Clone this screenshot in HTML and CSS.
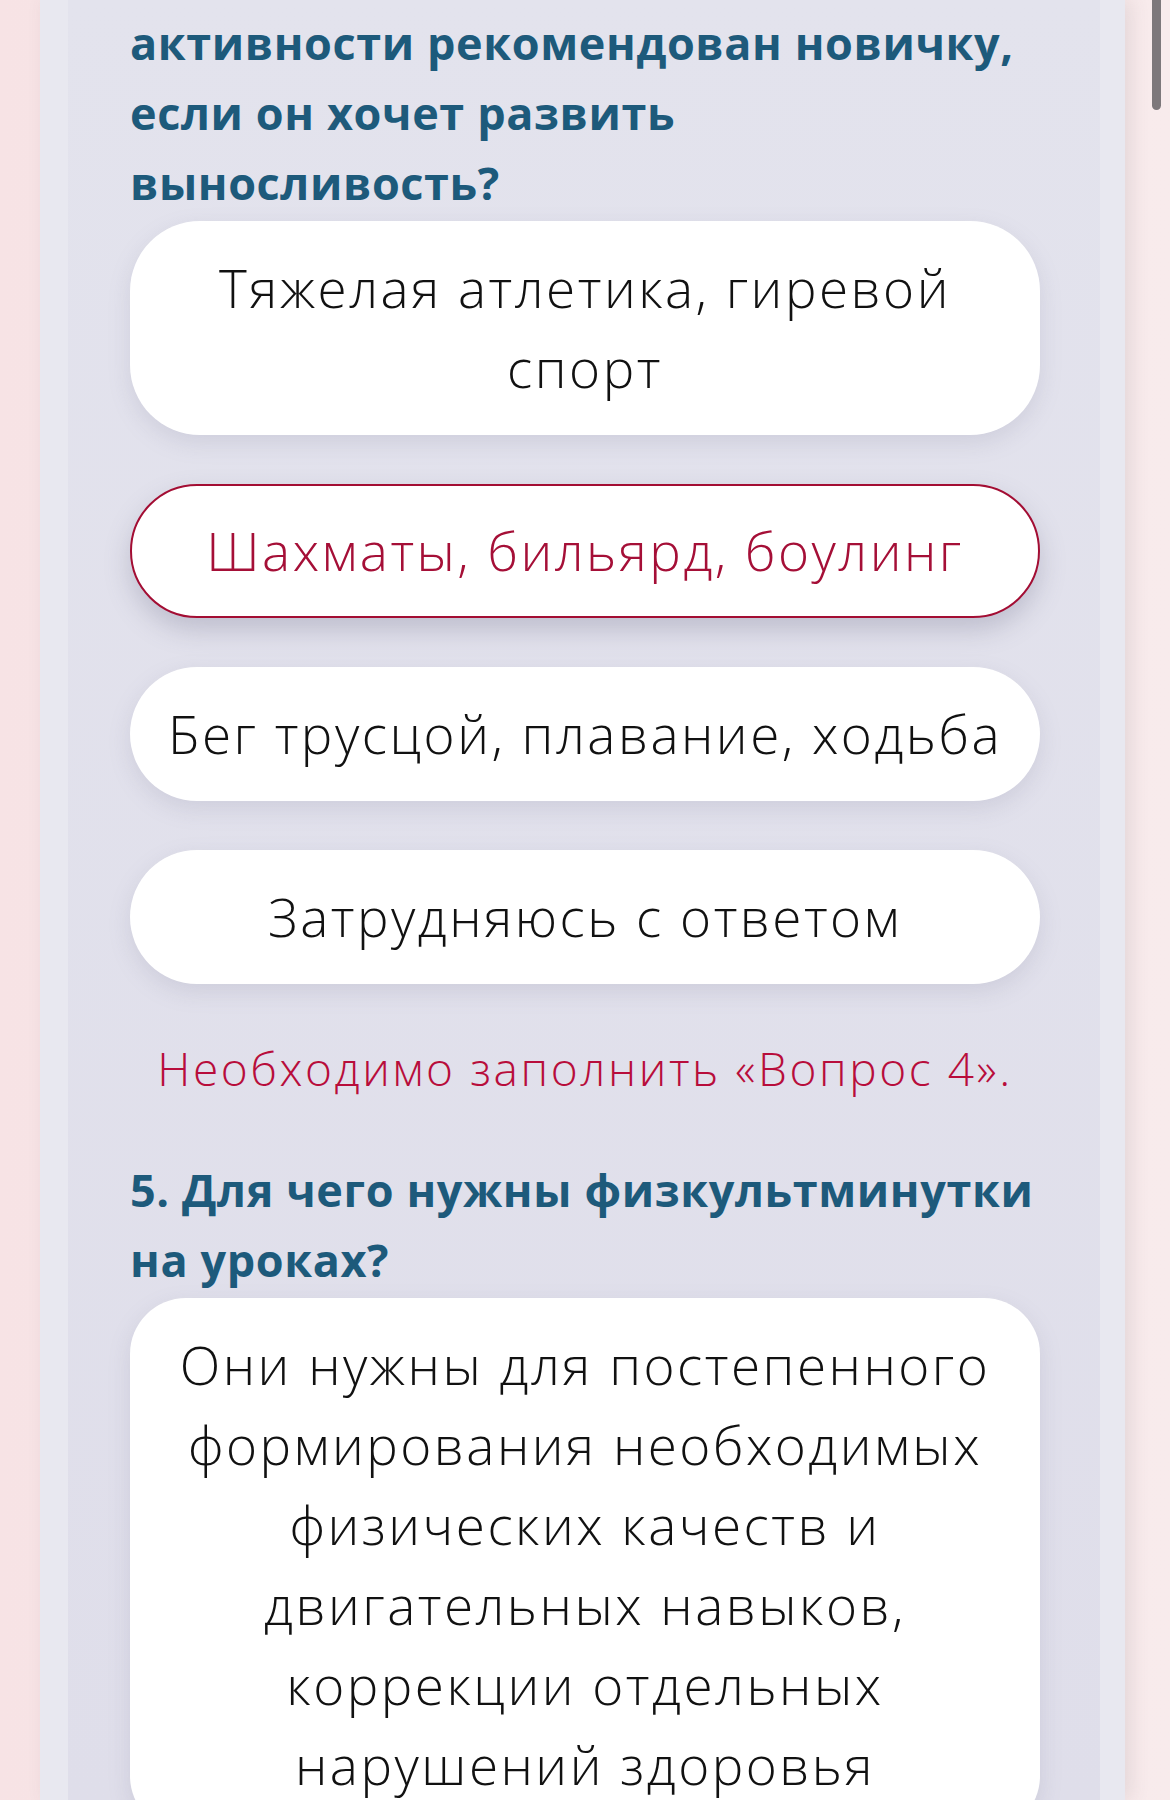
FILE: index.html
```html
<!DOCTYPE html>
<html lang="ru">
<head>
<meta charset="utf-8">
<title>Тест</title>
<link rel="stylesheet" href="styles.css">
</head>
<body>
<div class="page">
  <div class="card">
    <div class="card-inner">
      <section class="question">
        <h2 class="q-title">активности рекомендован новичку, если он хочет развить выносливость?</h2>
        <div class="options">
          <div class="option">Тяжелая атлетика, гиревой спорт</div>
          <div class="option option-selected">Шахматы, бильярд, боулинг</div>
          <div class="option">Бег трусцой, плавание, ходьба</div>
          <div class="option">Затрудняюсь с ответом</div>
        </div>
        <p class="error">Необходимо заполнить «Вопрос 4».</p>
      </section>
      <section class="question">
        <h2 class="q-title">5. Для чего нужны физкультминутки на уроках?</h2>
        <div class="options">
          <div class="option option-long">Они нужны для постепенного формирования необходимых физических качеств и двигательных навыков, коррекции отдельных нарушений здоровья</div>
        </div>
      </section>
    </div>
  </div>
</div>
<div class="scrollbar"></div>
</body>
</html>
```
FILE: styles.css
```css
html, body {
  margin: 0;
  padding: 0;
  height: 1800px;
  overflow: hidden;
}
body {
  background: linear-gradient(90deg, #f7e3e5 0%, #f8ebec 100%);
  font-family: "Open Sans", "Noto Sans", sans-serif;
}
.page {
  padding: 0 45px 0 40px;
  height: 1800px;
}
.card {
  background: #e8e8f0;
  height: 1800px;
  padding: 0 25px 0 28px;
  box-shadow: 6px 0 18px rgba(90, 70, 80, 0.12);
}
.card-inner {
  background: linear-gradient(180deg, #e3e3ed 0%, #dfdeea 100%);
  height: 1800px;
  padding: 8px 60px 0 62px;
  box-sizing: border-box;
}
.q-title {
  margin: 0;
  color: #1d5a7b;
  font-weight: 700;
  font-size: 45px;
  line-height: 70px;
  letter-spacing: 0.6px;
  width: 910px;
}
.options {
  display: flex;
  flex-direction: column;
  gap: 49px;
  margin-top: 3px;
}
.option {
  background: #ffffff;
  border-radius: 70px;
  padding: 25px 18px;
  text-align: center;
  font-size: 53px;
  font-weight: 350;
  letter-spacing: 2.5px;
  line-height: 80px;
  color: #111111;
  box-shadow: 0 8px 22px rgba(120, 120, 150, 0.18);
  border: 2px solid transparent;
}
.option-selected {
  border-color: #a30d33;
  color: #a50f37;
  box-shadow: 0 12px 26px rgba(100, 100, 130, 0.28);
}
.option-long {
  border-radius: 56px;
}
.error {
  margin: 49px 0 52px;
  text-align: center;
  color: #b80d3b;
  font-size: 46px;
  font-weight: 350;
  letter-spacing: 2.6px;
  line-height: 70px;
}
.scrollbar {
  position: fixed;
  top: 0;
  left: 1152px;
  width: 9px;
  height: 110px;
  background: #7d787b;
  border-radius: 0 0 5px 5px;
}
```
